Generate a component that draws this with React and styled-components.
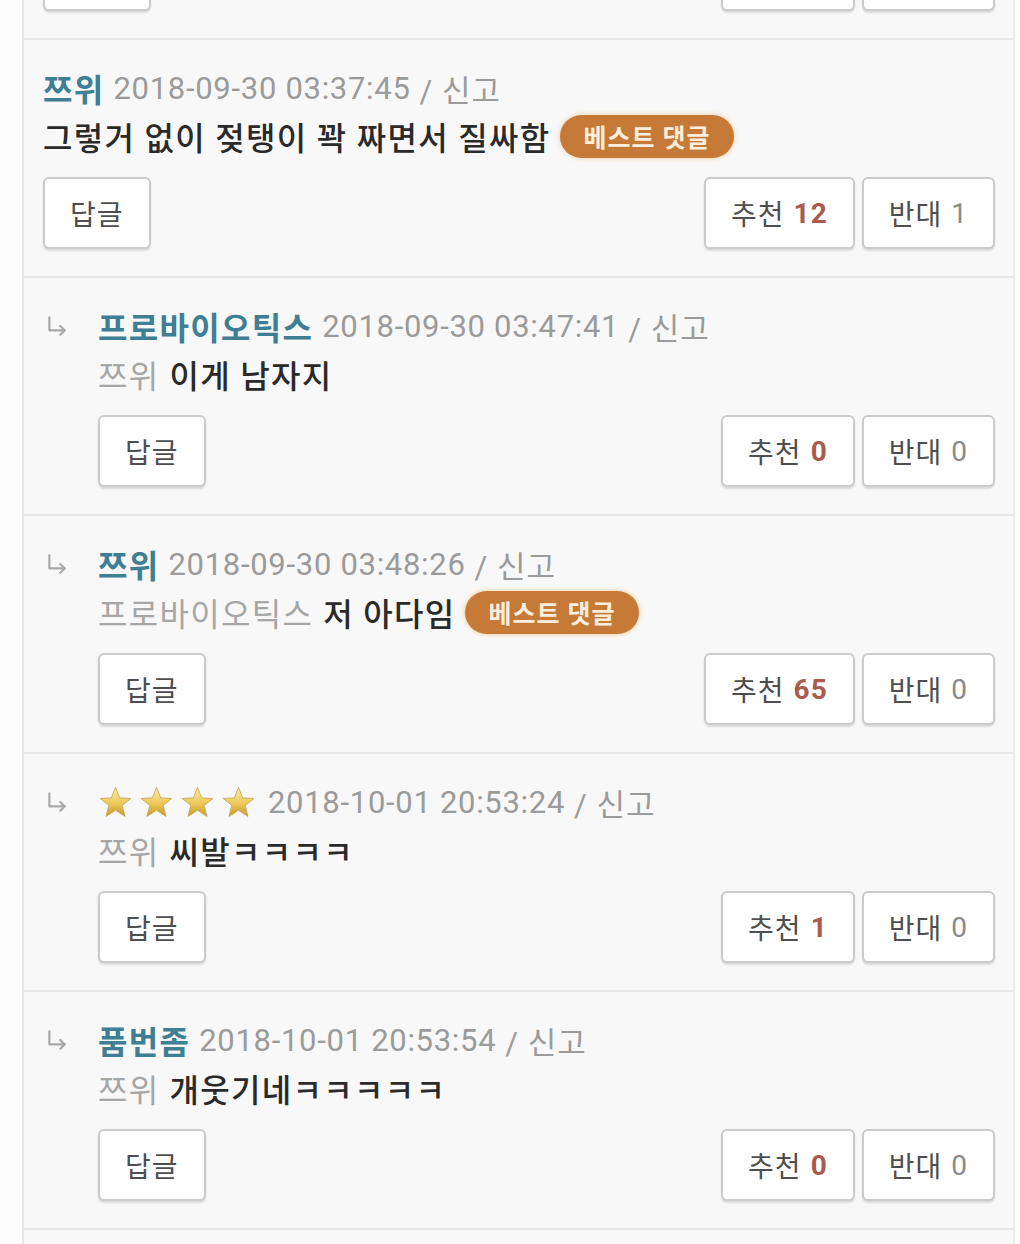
import styled, { createGlobalStyle } from "styled-components";

const GlobalStyle = createGlobalStyle`
    html, body {
        margin: 0;
        padding: 0;
        background: #fdfdfd;
    }
    body {
        font-family: "Roboto", "Noto Sans CJK KR", sans-serif;
        overflow: hidden;
    }
`;

const comments = [
    { reply: false, name: "쯔위", date: "2018-09-30 03:21:10", text: "ㅋㅋㅋ", up: 3, down: 0 },
    { reply: false, name: "쯔위", date: "2018-09-30 03:37:45", text: "그렇거 없이 젖탱이 꽉 짜면서 질싸함", best: true, up: 12, down: 1 },
    { reply: true, name: "프로바이오틱스", date: "2018-09-30 03:47:41", to: "쯔위", text: "이게 남자지", up: 0, down: 0 },
    { reply: true, name: "쯔위", date: "2018-09-30 03:48:26", to: "프로바이오틱스", text: "저 아다임", best: true, up: 65, down: 0 },
    { reply: true, stars: 4, date: "2018-10-01 20:53:24", to: "쯔위", text: "씨발ㅋㅋㅋㅋ", up: 1, down: 0 },
    { reply: true, name: "품번좀", date: "2018-10-01 20:53:54", to: "쯔위", text: "개웃기네ㅋㅋㅋㅋㅋ", up: 0, down: 0 },
    { reply: true, name: "쯔위", date: "2018-10-01 21:02:11", to: "품번좀", text: "ㅋㅋㅋ", up: 0, down: 0 },
];

const ReplyArrow = () => (
    <svg width="24" height="24" viewBox="0 0 22 22" fill="none" stroke="#a9a9a9" strokeWidth="2" strokeLinecap="round" strokeLinejoin="round">
        <path d="M4 3 V15 H18" />
        <path d="M14 11 L18 15 L14 19" />
    </svg>
);

const Star = () => (
    <svg width="35" height="33" viewBox="0 0 24 23">
        <defs>
            <linearGradient id="goldStar" x1="0" y1="0" x2="0" y2="1">
                <stop offset="0" stopColor="#fcefb0" />
                <stop offset="0.55" stopColor="#ecc85a" />
                <stop offset="1" stopColor="#c9982a" />
            </linearGradient>
        </defs>
        <polygon
            points="12,1 14.9,8.3 22.7,8.7 16.6,13.6 18.6,21.2 12,16.9 5.4,21.2 7.4,13.6 1.3,8.7 9.1,8.3"
            fill="url(#goldStar)"
            stroke="#c8a450"
            strokeWidth="0.6"
            strokeLinejoin="round"
        />
    </svg>
);

const CommentBlock = ({ c }) => (
    <Block>
        {c.reply && (
            <ArrowCol>
                <ReplyArrow />
            </ArrowCol>
        )}
        <Body>
            <Meta>
                {c.stars ? (
                    <Stars>
                        {Array.from({ length: c.stars }).map((_, i) => <Star key={i} />)}
                    </Stars>
                ) : (
                    <Name>{c.name}</Name>
                )}
                <DateText>{c.date}</DateText>
                <Report>/ 신고</Report>
            </Meta>
            <TextLine>
                {c.to && <ToName>{c.to}</ToName>}
                <Text>{c.text}</Text>
                {c.best && <Badge>베스트 댓글</Badge>}
            </TextLine>
            <Actions>
                <Button>답글</Button>
                <Votes>
                    <Button>추천 <Up>{c.up}</Up></Button>
                    <Button>반대 <Down>{c.down}</Down></Button>
                </Votes>
            </Actions>
        </Body>
    </Block>
);

export default function App() {
    return (
        <>
            <GlobalStyle />
            <Panel>
                {comments.map((c, i) => <CommentBlock key={i} c={c} />)}
            </Panel>
        </>
    );
}

const Panel = styled.div`
    margin: -200px 0 0 22px;
    width: 993px;
    box-sizing: border-box;
    background: #f8f8f8;
    border-left: 2px solid #e8e8e8;
    border-right: 2px solid #ececec;
`;

const Block = styled.div`
    display: flex;
    border-top: 2px solid #e8e8e8;
    padding: 24px 18px 27px 19px;
`;

const ArrowCol = styled.div`
    width: 55px;
    flex: none;
    height: 48px;
    display: flex;
    align-items: center;
    padding-left: 2px;
    box-sizing: border-box;
`;

const Body = styled.div`
    flex: 1;
    min-width: 0;
`;

const Meta = styled.div`
    display: flex;
    align-items: center;
    height: 48px;
    font-size: 32px;
    color: #9b9b9b;
    white-space: nowrap;
`;

const Name = styled.span`
    font-weight: 700;
    color: #3e7f93;
    letter-spacing: 1.3px;
    margin-right: 9px;
`;

const Stars = styled.span`
    display: inline-flex;
    gap: 6px;
    margin-right: 12px;
    & > svg {
        display: block;
    }
`;

const DateText = styled.span`
    font-size: 31px;
    letter-spacing: 0.7px;
    margin-right: 9px;
`;

const Report = styled.span`
    font-size: 31px;
    letter-spacing: 1px;
`;

const TextLine = styled.div`
    display: flex;
    align-items: center;
    height: 48px;
    font-size: 32px;
    letter-spacing: 1.3px;
    white-space: nowrap;
`;

const ToName = styled.span`
    color: #a6a6a6;
    margin-right: 10px;
`;

const Text = styled.span`
    color: #2a2a2a;
    font-weight: 500;
`;

const Badge = styled.span`
    display: inline-flex;
    align-items: center;
    height: 43px;
    padding: 0 23px;
    margin-left: 10px;
    border-radius: 22px;
    background: #c67a38;
    color: #fbeedd;
    font-size: 25px;
    font-weight: 700;
    letter-spacing: 1px;
    box-shadow: 0 0 5px rgba(235, 160, 70, 0.55);
`;

const Actions = styled.div`
    display: flex;
    justify-content: space-between;
    margin-top: 17px;
`;

const Votes = styled.div`
    display: flex;
    gap: 7px;
`;

const Button = styled.div`
    height: 72px;
    box-sizing: border-box;
    padding: 0 25px;
    display: flex;
    align-items: center;
    gap: 9px;
    background: #fff;
    border: 2px solid #cbcbcb;
    border-radius: 6px;
    box-shadow: 0 2px 2px rgba(0, 0, 0, 0.12);
    font-size: 28px;
    letter-spacing: 1px;
    color: #4e4e4e;
    white-space: nowrap;
`;

const Up = styled.span`
    color: #ab5a4e;
    font-weight: 700;
`;

const Down = styled.span`
    color: #8a8a8a;
`;
